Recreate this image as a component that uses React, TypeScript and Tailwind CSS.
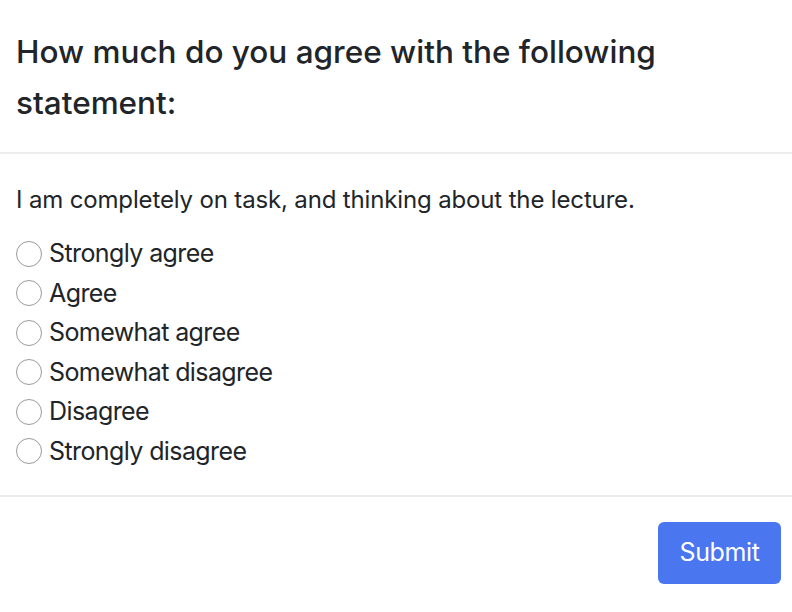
import React from 'react';

const options = [
  'Strongly agree',
  'Agree',
  'Somewhat agree',
  'Somewhat disagree',
  'Disagree',
  'Strongly disagree',
];

const App: React.FC = () => {
  return (
    <div className="w-[792px] h-[612px] bg-white text-[#212529] font-['Inter','Liberation_Sans',sans-serif]">
      <div className="pl-4 pr-8 pt-[26px] pb-[24px] border-b-2 border-[#ececec]">
        <h2 className="text-[31.5px] leading-[51px] font-medium">
          How much do you agree with the following statement:
        </h2>
      </div>
      <div className="px-4 pt-[30px] pb-[24px] border-b-2 border-[#ececec]">
        <p className="text-[24px] leading-[32px] tracking-[-0.15px] mb-[18px]">
          I am completely on task, and thinking about the lecture.
        </p>
        <div className="flex flex-col">
          {options.map((o) => (
            <label key={o} className="flex items-center h-[39.5px] text-[25px] tracking-[-0.6px]">
              <span className="w-[26px] h-[26px] rounded-full border-[1.5px] border-[#9a9a9a] mr-[7px] shrink-0" />
              {o}
            </label>
          ))}
        </div>
      </div>
      <div className="flex justify-end px-[11px] pt-[25px]">
        <button className="w-[123px] h-[62px] rounded-[6px] bg-[#4a76f0] text-white text-[25px] tracking-[-0.4px]">
          Submit
        </button>
      </div>
    </div>
  );
};

export default App;
